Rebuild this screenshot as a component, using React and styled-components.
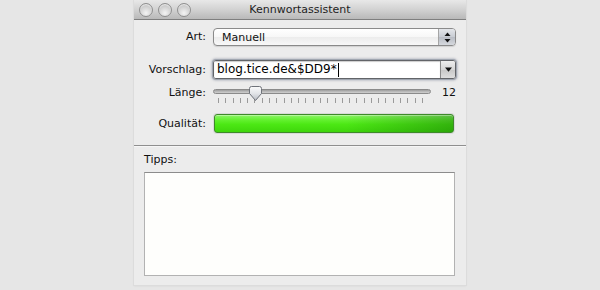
import styled, { createGlobalStyle } from "styled-components";

const GlobalStyle = createGlobalStyle`
  html, body {
    margin: 0;
    padding: 0;
    background: #e6e6e6;
    font-family: "DejaVu Sans", "Liberation Sans", sans-serif;
  }
`;

const Page = styled.div`
  width: 600px;
  height: 290px;
  display: flex;
  justify-content: center;
  align-items: flex-start;
  overflow: hidden;
`;

const Window = styled.div`
  width: 332px;
  height: 285px;
  background: #ececec;
  display: flex;
  flex-direction: column;
  box-shadow: 0 0 0 1px #dcdcdc, 0 1px 2px rgba(0, 0, 0, 0.08);
`;

const TitleBar = styled.div`
  height: 19px;
  border-bottom: 1px solid #7f7f7f;
  background: linear-gradient(to bottom, #e8e8e8 0%, #d2d2d2 50%, #b9b9b9 100%);
  display: flex;
  align-items: center;
  position: relative;
  padding-left: 5px;
`;

const Lights = styled.div`
  display: flex;
  gap: 5px;
`;

const Light = styled.span`
  width: 12px;
  height: 12px;
  border-radius: 50%;
  border: 1px solid #8f8f8f;
  background: radial-gradient(circle at 50% 75%, #f4f4f4 0%, #d8d8d8 45%, #b4b4b4 100%);
  box-shadow: inset 0 1px 1px rgba(255, 255, 255, 0.7);
`;

const Title = styled.div`
  position: absolute;
  left: 0;
  right: 0;
  top: 0;
  line-height: 20px;
  text-align: center;
  font-size: 11px;
  color: #1e1e1e;
  pointer-events: none;
`;

const Form = styled.div`
  display: grid;
  grid-template-columns: 72px 243px;
  column-gap: 7px;
  padding: 8px 10px 0 0;
  align-items: center;
`;

const Label = styled.div`
  text-align: right;
  font-size: 11px;
  color: #111;
  height: ${(p) => p.$h}px;
  line-height: ${(p) => p.$h}px;
  margin-bottom: ${(p) => p.$mb}px;
`;

const Cell = styled.div`
  height: ${(p) => p.$h}px;
  margin-bottom: ${(p) => p.$mb}px;
  position: relative;
`;

const Popup = styled.div`
  height: 18px;
  box-sizing: border-box;
  border: 1px solid #8a8a8a;
  border-radius: 4px;
  background: linear-gradient(to bottom, #ffffff 0%, #f7f7f7 50%, #ececec 51%, #f8f8f8 100%);
  display: flex;
  align-items: center;
  overflow: hidden;
  box-shadow: 0 1px 1px rgba(0, 0, 0, 0.12);
`;

const PopupText = styled.span`
  flex: 1;
  padding-left: 8px;
  font-size: 11px;
  color: #111;
`;

const Stepper = styled.div`
  width: 16px;
  height: 100%;
  border-left: 1px solid #a5a5a5;
  background: linear-gradient(to bottom, #e4e6ea 0%, #c8ccd3 50%, #b8bcc4 51%, #d6d9de 100%);
  display: flex;
  align-items: center;
  justify-content: center;
`;

const Combo = styled.div`
  height: 19px;
  display: flex;
  box-sizing: border-box;
  border: 1px solid #626468;
  border-radius: 3px;
  box-shadow: 0 0 0 1px #a0a6b0, 0 0 2px 2px rgba(120, 130, 150, 0.35);
  overflow: hidden;
`;

const Field = styled.div`
  flex: 1;
  background: #fff;
  font-size: 12px;
  color: #000;
  padding-left: 3px;
  line-height: 17px;
  display: flex;
  align-items: center;
  box-shadow: inset 0 1px 1px rgba(0, 0, 0, 0.2);
`;

const Caret = styled.span`
  width: 1px;
  height: 14px;
  background: #000;
  margin-left: 1px;
`;

const DropButton = styled.div`
  width: 14px;
  border-left: 1px solid #8a8a8a;
  background: linear-gradient(to bottom, #eeeeee 0%, #d6d6d6 50%, #c7c7c7 51%, #dedede 100%);
  display: flex;
  align-items: center;
  justify-content: center;
`;

const SliderRow = styled.div`
  display: flex;
  align-items: flex-start;
  height: 18px;
`;

const SliderBox = styled.div`
  width: 218px;
  position: relative;
  height: 18px;
`;

const Track = styled.div`
  position: absolute;
  left: 0;
  right: 0;
  top: 3px;
  height: 3px;
  border-radius: 3px;
  border: 1px solid #8a8a8a;
  background: linear-gradient(to bottom, #9c9c9c 0%, #b8b8b8 50%, #cfcfcf 100%);
`;

const Ticks = styled.div`
  position: absolute;
  left: 5px;
  width: 205px;
  top: 12px;
  height: 5px;
  display: flex;
  justify-content: space-between;
`;

const Tick = styled.span`
  width: 1px;
  height: 5px;
  background: #9a9a9a;
`;

const Knob = styled.svg`
  position: absolute;
  left: 36px;
  top: 0;
`;

const Value = styled.div`
  flex: 1;
  text-align: right;
  font-size: 11px;
  line-height: 12px;
  padding-top: 1px;
  color: #111;
`;

const Meter = styled.div`
  height: 19px;
  margin-left: 1px;
  width: 240px;
  box-sizing: border-box;
  border-radius: 3px;
  border: 1px solid #3e8a2a;
  background:
    linear-gradient(to right, rgba(0, 60, 0, 0) 55%, rgba(0, 70, 0, 0.32) 100%),
    linear-gradient(to bottom, #8ef46a 0%, #62f02e 30%, #4ce814 55%, #3fd60c 100%);
  box-shadow: 0 0 0 1px rgba(0, 0, 0, 0.08), inset 0 1px 0 rgba(255, 255, 255, 0.35);
`;

const Separator = styled.div`
  height: 1px;
  background: #8f8f8f;
  margin-top: 12px;
  box-shadow: 0 1px 0 #f6f6f6;
`;

const Tips = styled.div`
  flex: 1;
  display: flex;
  flex-direction: column;
  padding: 7px 11px 9px 10px;
`;

const TipsLabel = styled.div`
  font-size: 11px;
  line-height: 13px;
  color: #111;
  margin-bottom: 6px;
`;

const TipsBox = styled.div`
  flex: 1;
  background: #fefefc;
  border: 1px solid #b2b2b2;
  border-top-color: #8c8c8c;
`;

const Arrows = () => (
  <svg width="7" height="11" viewBox="0 0 7 11">
    <path d="M3.5 0.5 L6.5 4 L0.5 4 Z" fill="#111" />
    <path d="M3.5 10.5 L6.5 7 L0.5 7 Z" fill="#111" />
  </svg>
);

const Down = () => (
  <svg width="7" height="5" viewBox="0 0 7 5">
    <path d="M0 0.5 L7 0.5 L3.5 4.8 Z" fill="#111" />
  </svg>
);

export default function App() {
  const ticks = Array.from({ length: 29 });
  return (
    <>
      <GlobalStyle />
      <Page>
        <Window>
          <TitleBar>
            <Lights>
              <Light />
              <Light />
              <Light />
            </Lights>
            <Title>Kennwortassistent</Title>
          </TitleBar>
          <Form>
            <Label $h={18} $mb={14}>Art:</Label>
            <Cell $h={18} $mb={14}>
              <Popup>
                <PopupText>Manuell</PopupText>
                <Stepper>
                  <Arrows />
                </Stepper>
              </Popup>
            </Cell>

            <Label $h={19} $mb={7}>Vorschlag:</Label>
            <Cell $h={19} $mb={7}>
              <Combo>
                <Field>
                  blog.tice.de&amp;$DD9*
                  <Caret />
                </Field>
                <DropButton>
                  <Down />
                </DropButton>
              </Combo>
            </Cell>

            <Label $h={14} $mb={14}>Länge:</Label>
            <Cell $h={18} $mb={10}>
              <SliderRow>
                <SliderBox>
                  <Track />
                  <Ticks>
                    {ticks.map((_, i) => (
                      <Tick key={i} />
                    ))}
                  </Ticks>
                  <Knob width="13" height="15" viewBox="0 0 13 15">
                    <defs>
                      <linearGradient id="kg" x1="0" y1="0" x2="0" y2="1">
                        <stop offset="0" stopColor="#fbfbfb" />
                        <stop offset="0.5" stopColor="#e2e4e8" />
                        <stop offset="1" stopColor="#b9bdc4" />
                      </linearGradient>
                    </defs>
                    <path
                      d="M2.5 0.5 H10.5 Q12.5 0.5 12.5 2.5 V7.5 L6.5 14.5 L0.5 7.5 V2.5 Q0.5 0.5 2.5 0.5 Z"
                      fill="url(#kg)"
                      stroke="#6f737a"
                    />
                  </Knob>
                </SliderBox>
                <Value>12</Value>
              </SliderRow>
            </Cell>

            <Label $h={19} $mb={0}>Qualität:</Label>
            <Cell $h={19} $mb={0}>
              <Meter />
            </Cell>
          </Form>
          <Separator />
          <Tips>
            <TipsLabel>Tipps:</TipsLabel>
            <TipsBox />
          </Tips>
        </Window>
      </Page>
    </>
  );
}
